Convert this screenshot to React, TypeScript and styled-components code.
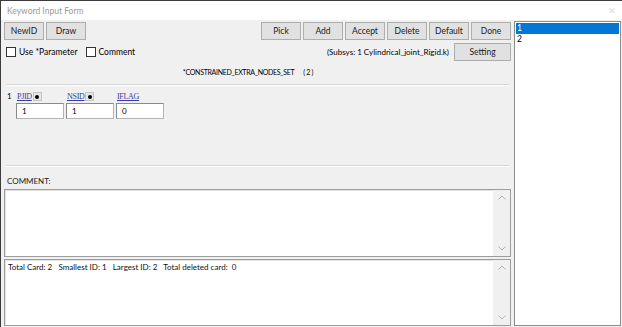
import React from "react";
import styled, { createGlobalStyle } from "styled-components";

const Global = createGlobalStyle`
  html, body { margin: 0; padding: 0; background: #f0f0f0; }
  body { font-family: Lato, "Noto Sans", sans-serif; font-size: 8px; color: #000; }
  * { box-sizing: border-box; }
`;

const Window = styled.div`
  width: 622px;
  height: 327px;
  display: flex;
  flex-direction: column;
  background: #f0f0f0;
  border-top: 1px solid #3c3c3c;
  border-left: 1px solid #3c3c3c;
  overflow: hidden;
`;

const TitleBar = styled.div`
  height: 19px;
  flex: none;
  background: #fff;
  display: flex;
  align-items: center;
  justify-content: space-between;
  padding: 0 6px 0 6px;
  color: #9a9a9a;
  font-size: 8.5px;
`;

const CloseX = styled.span`
  color: #dcdcdc;
  font-size: 9px;
  line-height: 1;
`;

const Body = styled.div`
  flex: 1;
  display: flex;
  min-height: 0;
`;

const Left = styled.div`
  width: 511px;
  flex: none;
  display: flex;
  flex-direction: column;
  padding: 2px 0 1px 3px;
`;

const Toolbar = styled.div`
  display: flex;
  justify-content: space-between;
  padding-right: 1px;
  height: 18px;
  flex: none;
`;

const Group = styled.div`
  display: flex;
  gap: 2px;
`;

const Button = styled.button<{ $w?: number }>`
  width: ${(p) => p.$w ?? 40}px;
  height: 18px;
  padding: 0;
  background: #e1e1e1;
  border: 1px solid #adadad;
  font-family: inherit;
  font-size: 8.5px;
  color: #1a1a1a;
  line-height: 16px;
`;

const Row2 = styled.div`
  display: flex;
  align-items: center;
  justify-content: space-between;
  margin-top: 3px;
  height: 18px;
  flex: none;
  padding-right: 1px;
`;

const Checks = styled.div`
  display: flex;
  align-items: center;
  gap: 8px;
  padding-left: 2px;
`;

const Check = styled.label`
  display: flex;
  align-items: center;
  gap: 3px;
  font-size: 8.5px;
`;

const Box = styled.span`
  width: 10px;
  height: 10px;
  border: 1px solid #333;
  background: #fff;
`;

const SubsysWrap = styled.div`
  display: flex;
  align-items: center;
  gap: 5px;
`;

const KeywordTitle = styled.div`
  text-align: center;
  padding-right: 20px;
  margin-top: 4px;
  height: 14px;
  line-height: 14px;
  flex: none;
  font-size: 7px;
  letter-spacing: -0.3px;
`;

const Gap = styled.span`
  display: inline-block;
  width: 9px;
`;

const Separator = styled.div<{ $mt: number }>`
  margin: ${(p) => p.$mt}px 3px 0 2px;
  height: 2px;
  flex: none;
  border-top: 1px solid #d6d6d6;
  border-bottom: 1px solid #fff;
`;

const CardArea = styled.div`
  height: 79px;
  flex: none;
  display: flex;
  gap: 5px;
  padding: 5px 0 0 3px;
`;

const CardNum = styled.div`
  width: 4px;
  line-height: 11px;
`;

const Fields = styled.div`
  display: flex;
  gap: 2px;
`;

const Field = styled.div`
  display: flex;
  flex-direction: column;
  width: 48px;
`;

const LabelRow = styled.div`
  display: flex;
  align-items: center;
  gap: 1px;
  height: 11px;
  padding-left: 1px;
`;

const FieldLink = styled.span`
  font-family: "Liberation Serif", serif;
  font-size: 8px;
  color: #3b3ba8;
  text-decoration: underline;
  letter-spacing: -0.3px;
`;

const PickBtn = styled.span`
  width: 9px;
  height: 9px;
  background: #e6e6e6;
  border: 1px solid #c4c4c4;
  display: flex;
  align-items: center;
  justify-content: center;
  &::after {
    content: "";
    width: 4px;
    height: 4px;
    border-radius: 50%;
    background: #000;
  }
`;

const Input = styled.div`
  margin-top: 1px;
  height: 16px;
  width: 48px;
  background: #fff;
  border: 1px solid #b4b4b4;
  border-top-color: #8a8a8a;
  border-left-color: #8a8a8a;
  padding-left: 5px;
  line-height: 14px;
  font-size: 8px;
`;

const CommentLabel = styled.div`
  padding: 7px 0 0 3px;
  height: 22px;
  flex: none;
  line-height: 14px;
  color: #222;
`;

const TextBox = styled.div<{ $h: number }>`
  height: ${(p) => p.$h}px;
  width: 507px;
  flex: none;
  display: flex;
  background: #fff;
  border: 1px solid #9c9c9c;
  box-shadow: inset 1px 1px 0 #e3e3e3;
`;

const TextContent = styled.div`
  flex: 1;
  padding: 2px 0 0 3px;
  white-space: pre;
  color: #111;
`;

const ScrollBar = styled.div`
  width: 17px;
  flex: none;
  background: #f0f0f0;
  display: flex;
  flex-direction: column;
  justify-content: space-between;
  align-items: center;
  padding: 5px 0;
`;

const Spacer = styled.div`
  height: 2px;
  flex: none;
`;

const List = styled.div`
  margin: 1px 0 1px 2px;
  width: 107px;
  background: #fff;
  border: 1px solid #8c8c8c;
  padding: 1px;
`;

const Item = styled.div<{ $sel?: boolean }>`
  height: 11px;
  line-height: 11px;
  font-size: 8.5px;
  padding-left: 1px;
  background: ${(p) => (p.$sel ? "#0078d7" : "transparent")};
  color: ${(p) => (p.$sel ? "#fff" : "#000")};
`;

const Chevron = ({ up }: { up?: boolean }) => (
  <svg width="8" height="5" viewBox="0 0 8 5">
    <path
      d={up ? "M0.5 4.5 L4 1 L7.5 4.5" : "M0.5 0.5 L4 4 L7.5 0.5"}
      fill="none"
      stroke="#b4b4b4"
      strokeWidth="1"
    />
  </svg>
);

const fields = [
  { name: "PJID", value: "1", pick: true },
  { name: "NSID", value: "1", pick: true },
  { name: "IFLAG", value: "0", pick: false },
];

export default function App() {
  return (
    <>
      <Global />
      <Window>
        <TitleBar>
          <span>Keyword Input Form</span>
          <CloseX>✕</CloseX>
        </TitleBar>
        <Body>
          <Left>
            <Toolbar>
              <Group>
                <Button>NewID</Button>
                <Button>Draw</Button>
              </Group>
              <Group>
                <Button>Pick</Button>
                <Button>Add</Button>
                <Button>Accept</Button>
                <Button>Delete</Button>
                <Button>Default</Button>
                <Button>Done</Button>
              </Group>
            </Toolbar>
            <Row2>
              <Checks>
                <Check>
                  <Box />
                  Use *Parameter
                </Check>
                <Check>
                  <Box />
                  Comment
                </Check>
              </Checks>
              <SubsysWrap>
                <span>(Subsys: 1 Cylindrical_joint_Rigid.k)</span>
                <Button $w={57}>Setting</Button>
              </SubsysWrap>
            </Row2>
            <KeywordTitle>
              *CONSTRAINED_EXTRA_NODES_SET<Gap />( 2 )
            </KeywordTitle>
            <Separator $mt={5} />
            <CardArea>
              <CardNum>1</CardNum>
              <Fields>
                {fields.map((f) => (
                  <Field key={f.name}>
                    <LabelRow>
                      <FieldLink>{f.name}</FieldLink>
                      {f.pick && <PickBtn />}
                    </LabelRow>
                    <Input>{f.value}</Input>
                  </Field>
                ))}
              </Fields>
            </CardArea>
            <Separator $mt={0} />
            <CommentLabel>COMMENT:</CommentLabel>
            <TextBox $h={68}>
              <TextContent />
              <ScrollBar>
                <Chevron up />
                <Chevron />
              </ScrollBar>
            </TextBox>
            <Spacer />
            <TextBox $h={67}>
              <TextContent>
                {"Total Card: 2   Smallest ID: 1   Largest ID: 2   Total deleted card:  0"}
              </TextContent>
              <ScrollBar>
                <Chevron up />
                <Chevron />
              </ScrollBar>
            </TextBox>
          </Left>
          <List>
            <Item $sel>1</Item>
            <Item>2</Item>
          </List>
        </Body>
      </Window>
    </>
  );
}
